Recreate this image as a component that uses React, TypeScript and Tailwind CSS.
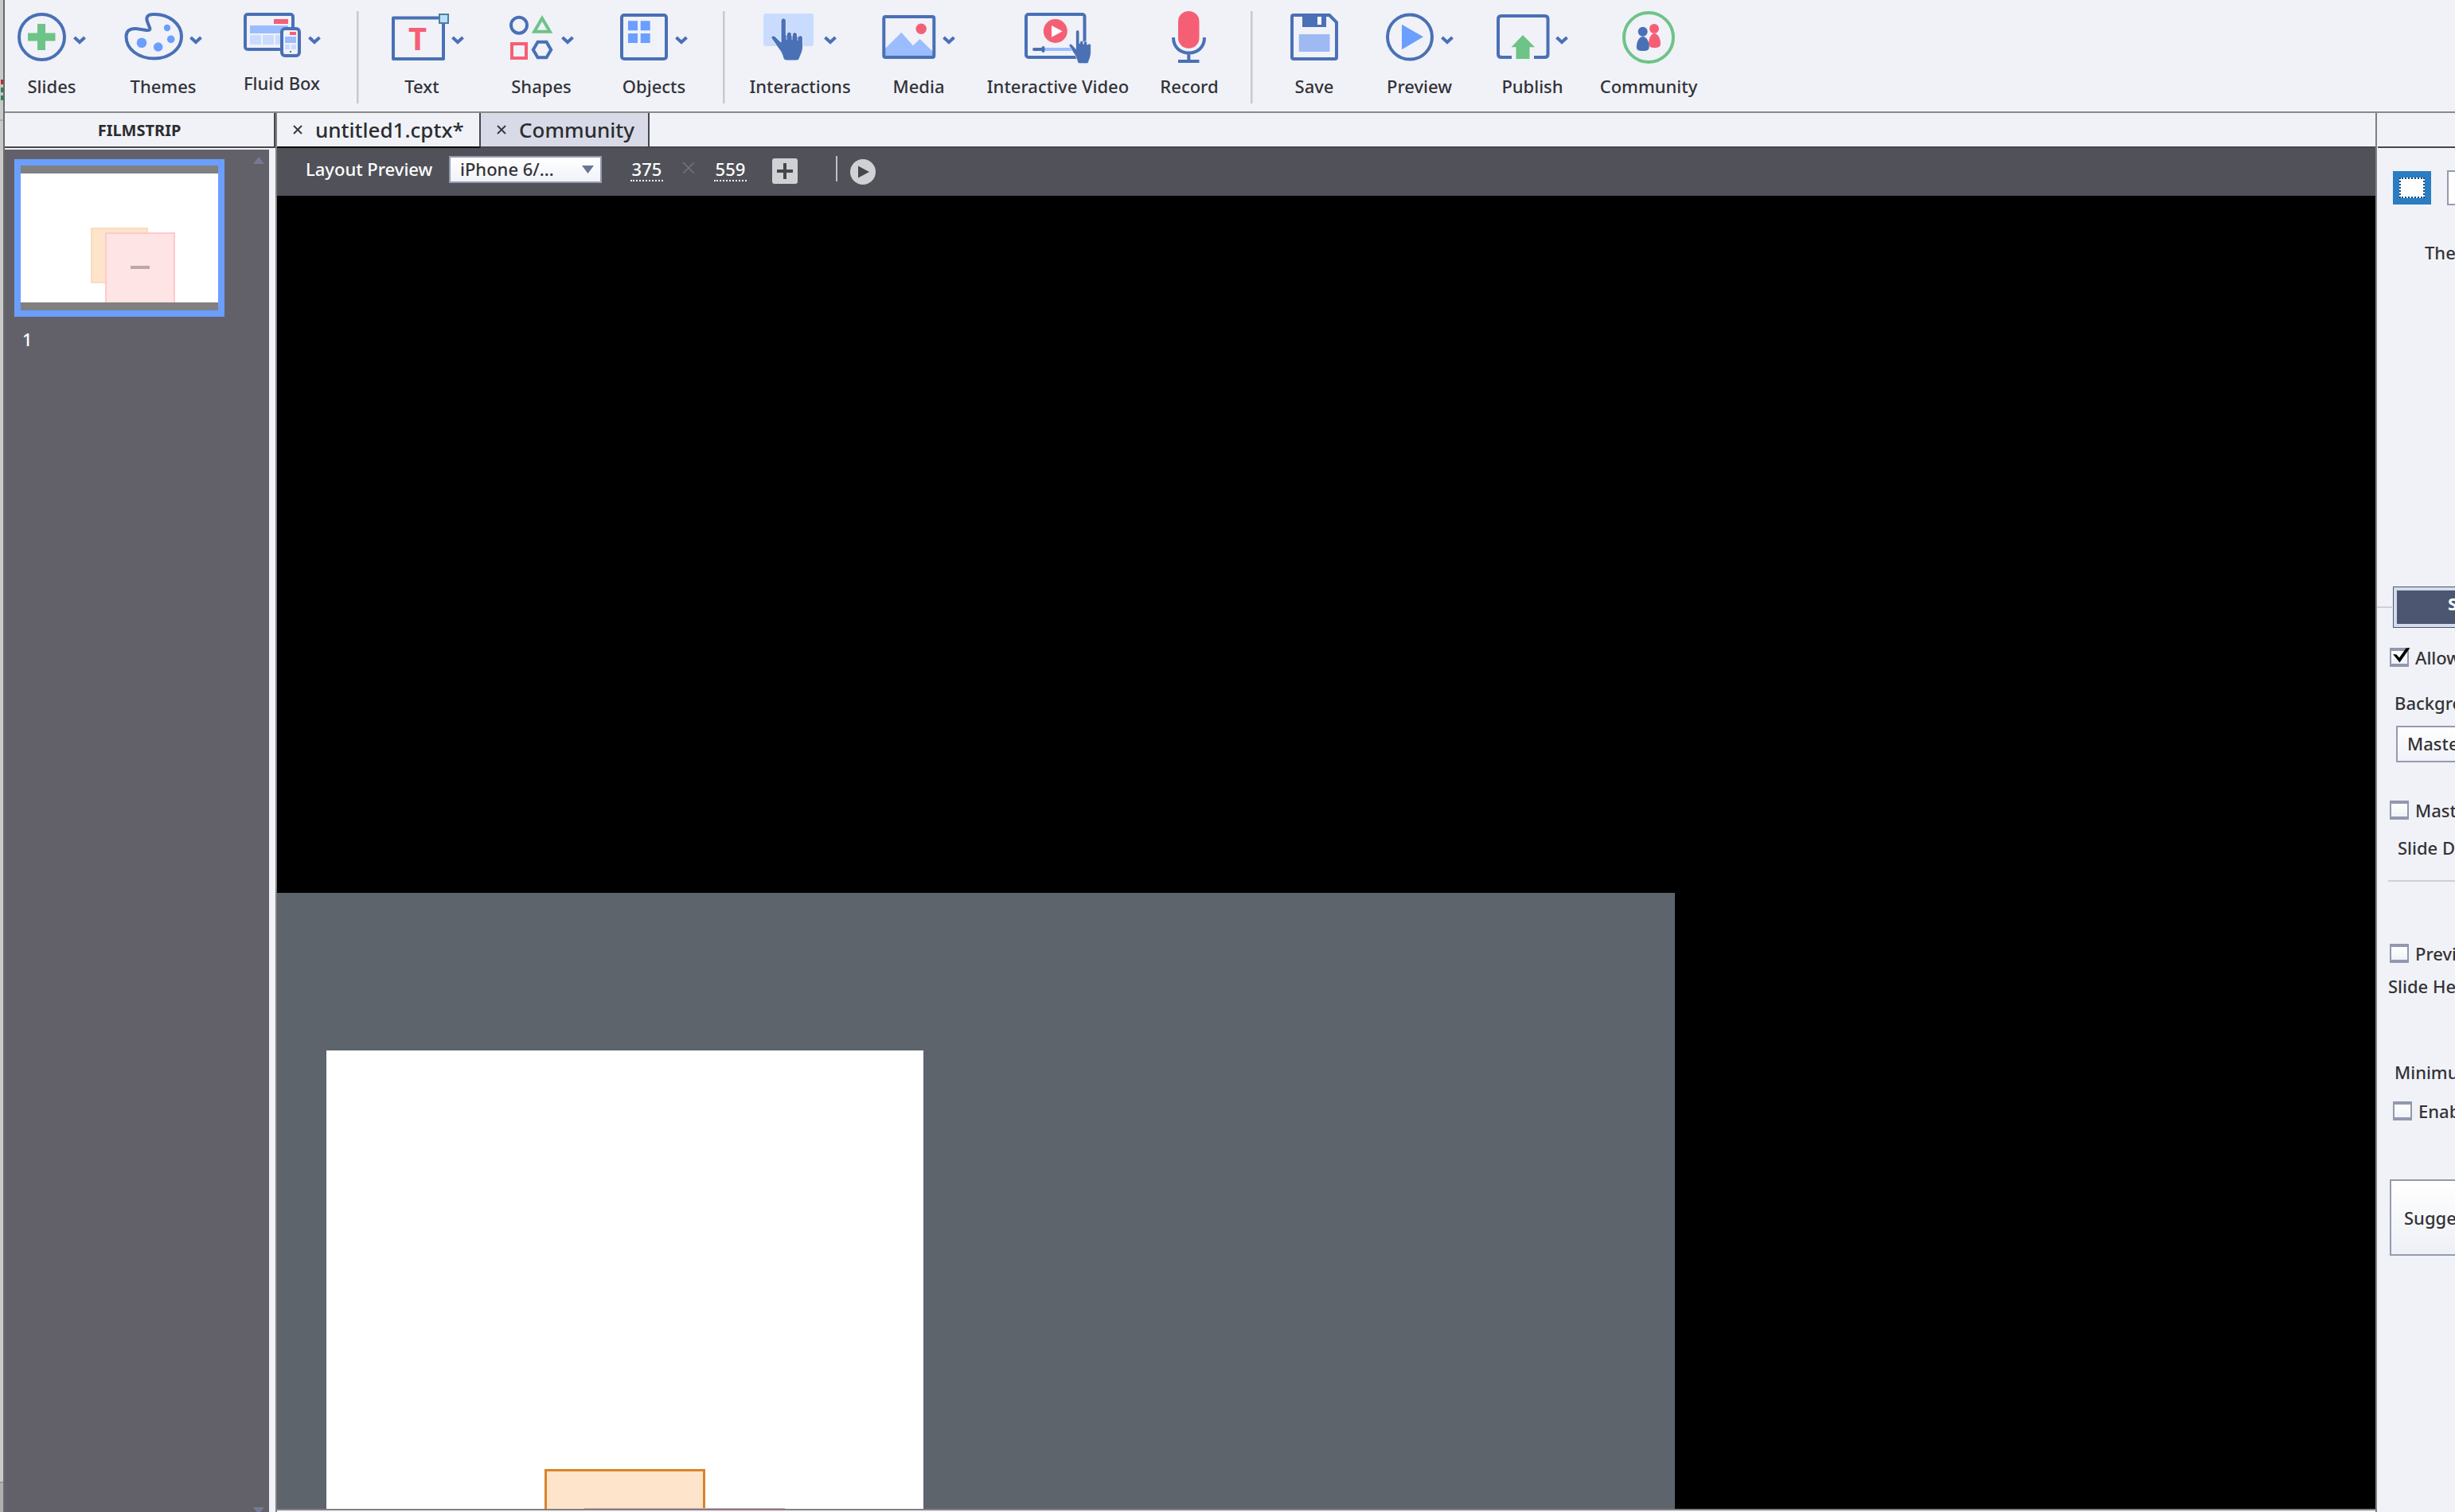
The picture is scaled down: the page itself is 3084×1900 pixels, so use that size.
import type { ReactNode } from "react";
import clsx from "clsx";

interface Tool {
  label: string;
  icon: ReactNode;
  iconWidth: number;
  slot: string;
  menu?: boolean;
  raised?: boolean;
}

const HAND =
  "M22 14a3.2 3.2 0 0 1 6.4 0V32h1V29.500q3-3 6 0V33h1V30q3-3 6 0v4h1V34q3-3 6 0V44C50 52 47 56 45 62Q44 64 41 64H29Q26 64 25 61C23 53 20 50 17 46L10 36C9 33 13 32 15 34L22 41Z";
const HAND_SLITS = "M29 30V38M36 31V38M43 32V39";

const insertTools: Tool[] = [
  {
    label: "Slides",
    iconWidth: 70,
    slot: "w-[118px]",
    menu: true,
    icon: (
      <>
        <circle cx="30.500" cy="34.500" r="28.500" fill="none" stroke="#4a70b5" strokeWidth="4" />
        <path d="M13 29.500h12v-11.500h10v11.500h12.500v10H35V51H25V39.500H13z" fill="#6ec387" />
      </>
    ),
  },
  {
    label: "Themes",
    iconWidth: 82,
    slot: "w-[162px]",
    menu: true,
    icon: (
      <>
        <path
          d="M36 6C56 5 72 18 72 34C72 50 56 61.500 38 61.500C18 61.500 2.500 50 2.500 34C2.500 27 7 23.500 15 24L28 26C32 26.500 33.500 25.500 31.500 21.500L29 15C27 9 30 6 36 6Z"
          fill="none"
          stroke="#4a70b5"
          strokeWidth="4"
        />
        <g fill="#6b9eff">
          <circle cx="22" cy="41.700" r="6.300" />
          <circle cx="42.700" cy="47" r="5.800" />
          <circle cx="58.700" cy="37.300" r="4.800" />
          <circle cx="54" cy="23" r="4.200" />
        </g>
      </>
    ),
  },
  {
    label: "Fluid Box",
    iconWidth: 81,
    slot: "w-[136px]",
    menu: true,
    raised: true,
    icon: (
      <>
        <rect x="2" y="6" width="60" height="44" rx="3" fill="none" stroke="#4a70b5" strokeWidth="4" />
        <path d="M38 12h18v6H38z" fill="#f55f76" />
        <path d="M8 20h48v10H8z" fill="#9bbcff" />
        <path d="M8 32h14v12H8zM24 32h14v12H24zM40 32h8v12h-8z" fill="#c9dcff" />
        <rect x="48" y="24" width="22" height="34" rx="4" fill="#f0f2f8" stroke="#4a70b5" strokeWidth="4" />
        <path d="M58 28h8v4h-8z" fill="#f55f76" />
        <path d="M52 34h14v8H52z" fill="#9bbcff" />
        <path d="M52 44h6v6h-6zM60 44h6v6h-6z" fill="#c9dcff" />
        <path d="M58 52h2v2h-2z" fill="#4a70b5" />
      </>
    ),
  },
];

const objectTools: Tool[] = [
  {
    label: "Text",
    iconWidth: 89,
    slot: "w-28",
    menu: true,
    icon: (
      <>
        <rect x="16" y="10.500" width="63" height="51.500" fill="none" stroke="#4a70b5" strokeWidth="4" strokeLinejoin="round" />
        <rect x="74" y="6" width="11" height="11" fill="#b8e0ff" stroke="#4f7f9f" strokeWidth="2" />
        <text x="46.500" y="51" textAnchor="middle" fontSize="40" fontWeight="700" fill="#f55f76">
          T
        </text>
      </>
    ),
  },
  {
    label: "Shapes",
    iconWidth: 65,
    slot: "w-[188px]",
    menu: true,
    icon: (
      <g fill="none" strokeWidth="4">
        <circle cx="12" cy="19.700" r="10" stroke="#4a70b5" />
        <path d="M41 11L50.800 27.700H31.200Z" stroke="#6ec387" />
        <path d="M3 43h18v18H3z" stroke="#f55f76" />
        <path d="M29.800 50.500L35.500 40.800H46.500L52.200 50.500L46.500 60.200H35.500Z" stroke="#4a70b5" />
      </g>
    ),
  },
  {
    label: "Objects",
    iconWidth: 69,
    slot: "w-[95px]",
    menu: true,
    icon: (
      <>
        <rect x="2" y="7" width="56" height="55" rx="3" fill="none" stroke="#4a70b5" strokeWidth="4" />
        <path d="M10 14.300h12v12H10zM25.700 14.300h12v12h-12zM10 30h12v12H10zM25.700 30h12v12h-12z" fill="#6b9eff" />
      </>
    ),
  },
];

const mediaTools: Tool[] = [
  {
    label: "Interactions",
    iconWidth: 76,
    slot: "w-[126px]",
    menu: true,
    icon: (
      <>
        <rect y="5" width="63" height="41" rx="3" fill="#c9dcff" />
        <path d={HAND} fill="#4a70b5" stroke="#e6eeff" strokeWidth="1" />
        <path d={HAND_SLITS} stroke="#c9dcff" strokeWidth="1" />
      </>
    ),
  },
  {
    label: "Media",
    iconWidth: 76,
    slot: "w-[172px]",
    menu: true,
    icon: (
      <>
        <path d="M4 49L24.300 28.700L39 45.300L47.500 37L64 53V58H4Z" fill="#9bbcff" />
        <rect x="2.300" y="9" width="63" height="51" rx="2" fill="none" stroke="#4a70b5" strokeWidth="4" />
        <circle cx="49.200" cy="24.300" r="6.700" fill="#f55f76" />
      </>
    ),
  },
  {
    label: "Interactive Video",
    iconWidth: 84,
    slot: "w-[178px]",
    icon: (
      <>
        <rect x="2" y="6" width="73.500" height="54" rx="3" fill="none" stroke="#4a70b5" strokeWidth="4" />
        <circle cx="38.800" cy="27" r="15" fill="#f55f76" />
        <path d="M34 20L47.600 27.300L34 34.700Z" fill="#fff" />
        <path d="M26 50H60" stroke="#9bbcff" strokeWidth="4" />
        <path d="M12 50H24M23.500 48v4" stroke="#4a70b5" strokeWidth="4" strokeLinecap="round" />
        <path d={HAND} transform="translate(49.300 17.200) scale(.69 .79)" fill="#4a70b5" stroke="#f0f2f8" strokeWidth="1" />
      </>
    ),
  },
  {
    label: "Record",
    iconWidth: 44,
    slot: "w-[152px]",
    icon: (
      <>
        <rect x="8" y="2" width="26.500" height="46.700" rx="13" fill="#f55f76" />
        <path d="M2 35C2 47 10 54.500 21.500 54.500S41 47 41 35M21.300 54V65M8 65H34.500" fill="none" stroke="#4a70b5" strokeWidth="4" />
      </>
    ),
  },
];

const projectTools: Tool[] = [
  {
    label: "Save",
    iconWidth: 60,
    slot: "w-[102px]",
    icon: (
      <>
        <path d="M4 7H49L58 16V60q0 2-2 2H4q-2 0-2-2V9q0-2 2-2z" fill="none" stroke="#4a70b5" strokeWidth="4" />
        <path d="M15 8h30v14H15z" fill="#4a70b5" />
        <path d="M34 9h5v10h-5z" fill="#fff" />
        <rect x="10.700" y="31" width="38.800" height="22" rx="1" fill="#9fb9f2" />
      </>
    ),
  },
  {
    label: "Preview",
    iconWidth: 69,
    slot: "w-[162px]",
    menu: true,
    icon: (
      <>
        <circle cx="30" cy="34.500" r="28" fill="none" stroke="#4a70b5" strokeWidth="4" />
        <path d="M20 18.700L47 34.300L20 50.300Z" fill="#6b9eff" />
      </>
    ),
  },
  {
    label: "Publish",
    iconWidth: 74,
    slot: "w-[122px]",
    menu: true,
    icon: (
      <>
        <path d="M19 60H6q-4 0-4-4V12q0-4 4-4H60.500q4 0 4 4V56q0 4-4 4H47" fill="none" stroke="#4a70b5" strokeWidth="4" />
        <path d="M33 32L48 47.300H41.500V62H24.500V47.300H18.500Z" fill="#6ec387" />
      </>
    ),
  },
  {
    label: "Community",
    iconWidth: 66,
    slot: "w-[170px]",
    icon: (
      <>
        <circle cx="33" cy="35" r="31" fill="none" stroke="#6ec387" strokeWidth="4" />
        <g fill="#f55f76">
          <circle cx="40" cy="24" r="6" />
          <path d="M40 30C45 30 48 37 48 43C48 47 45 48 40.500 48S33 47 33 43C33 37 36 30 40 30Z" />
        </g>
        <g fill="#4a70b5">
          <circle cx="25.700" cy="27.700" r="6" />
          <path d="M25.700 34C31 34 33.700 41 33.700 47C33.700 51 31 52 25.700 52S17.800 51 17.800 47C17.800 41 21 34 25.700 34Z" />
        </g>
      </>
    ),
  },
];

const ToolGroup = ({ tools, className }: { tools: Tool[]; className?: string }) => (
  <div className={clsx("flex", className)}>
    {tools.map((tool) => (
      <button
        key={tool.label}
        type="button"
        className={clsx("flex shrink-0 flex-col items-center whitespace-nowrap", tool.slot)}
      >
        <span className="flex">
          <svg width={tool.iconWidth} height="68" viewBox={`0 0 ${tool.iconWidth} 68`} aria-hidden="true">
            {tool.icon}
          </svg>
          {tool.menu && (
            <svg width="16" height="68" viewBox="0 0 16 68" aria-hidden="true">
              <path d="M1.500 35L8 41L14.500 35" fill="none" stroke="#4a70b5" strokeWidth="4" />
            </svg>
          )}
        </span>
        <span className={clsx("leading-6", tool.raised ? "mt-3" : "mt-4")}>{tool.label}</span>
      </button>
    ))}
  </div>
);

const Divider = ({ className }: { className: string }) => (
  <div className={clsx("mt-0.5 h-[116px] w-[3px] shrink-0 border-r border-[#dcdee6] bg-[#c6c8d2]", className)} />
);

const CloseIcon = () => (
  <svg width="12" height="12" viewBox="0 0 12 12" aria-hidden="true">
    <path d="M1 1L11 11M11 1L1 11" stroke="#3a3b42" strokeWidth="2" />
  </svg>
);

const DocumentTabs = () => (
  <div className="flex h-[44px] border-b-2 border-[#46474e] bg-[#f1f2f7] text-[26px] leading-8 text-[#2b2c30]">
    <div className="-mb-0.5 flex w-[256px] items-center border-r-2 border-b-2 border-r-[#46474e] border-b-[#0c0c10] pl-5">
      <button type="button" aria-label="Close untitled1.cptx">
        <CloseIcon />
      </button>
      <button type="button" className="ml-4">untitled1.cptx*</button>
    </div>
    <div className="flex w-[212px] items-center border-r-2 border-[#46474e] bg-[#d8dbe7] pl-5">
      <button type="button" aria-label="Close Community">
        <CloseIcon />
      </button>
      <button type="button" className="ml-4">Community</button>
    </div>
  </div>
);

const PreviewBar = () => (
  <div className="flex h-[60px] items-start bg-[#515259] pt-2.5 pl-9 text-white">
    <label htmlFor="device" className="w-[180px] pt-1 leading-6">
      Layout Preview
    </label>
    <div className="relative">
      <select
        id="device"
        className="block h-[34px] w-[192px] appearance-none border-2 border-[#949bb2] bg-linear-to-b from-white to-[#f0f2f8] pb-0.5 pl-3 leading-6 text-[#333338]"
      >
        <option>iPhone 6/...</option>
      </select>
      <svg className="pointer-events-none absolute top-3 right-2.5" width="15" height="10" aria-hidden="true">
        <path d="M0 0H15L7.500 10Z" fill="#6d7594" />
      </svg>
    </div>
    <button type="button" className="mt-1 ml-9 h-7 w-[41px] border-b-2 border-dotted pb-0.5 leading-6">
      375
    </button>
    <svg className="mt-2 ml-6" width="16" height="14" aria-hidden="true">
      <path d="M1 0L15 14M15 0L1 14" stroke="#74757b" strokeWidth="1.500" />
    </svg>
    <button type="button" className="mt-1 ml-6 h-7 w-[41px] border-b-2 border-dotted pb-0.5 leading-6">
      559
    </button>
    <button type="button" aria-label="Add device" className="mt-[3px] ml-8">
      <svg width="32" height="32" viewBox="0 0 32 32">
        <rect width="32" height="32" rx="3" fill="#d0d1d4" />
        <path d="M6 16H26M16 6V26" stroke="#46474b" strokeWidth="4" />
      </svg>
    </button>
    <div className="ml-12 h-8 w-0.5 bg-[#c0c1c5]" />
    <button type="button" aria-label="Play" className="mt-1 ml-4">
      <svg width="32" height="32" viewBox="0 0 32 32">
        <circle cx="16" cy="16" r="16" fill="#d0d1d4" />
        <path d="M10 8.500L24 16L10 23.500Z" fill="#46474b" />
      </svg>
    </button>
  </div>
);

const Filmstrip = () => (
  <aside className="flex w-[342px] shrink-0 flex-col border-r-2 border-[#808080] bg-[#f1f2f7]">
    <h2 className="h-[44px] border-r-2 border-b-2 border-[#46474e] pt-2.5 text-center text-[20px] font-bold leading-6 text-[#2b2c30]">
      FILMSTRIP
    </h2>
    <div className="mt-0.5 mr-2 flex flex-1 justify-between bg-[#62616a] pl-3">
      <div className="pt-3">
        <button type="button" aria-label="Slide 1" className="block w-[264px] border-8 border-[#6b9eff] bg-[#808080] py-2.5">
          <span className="relative block h-[162px] overflow-hidden bg-white">
            <span className="absolute top-[68px] left-[88px] h-[70px] w-[72px] border-2 border-[#f9dcc0] bg-[#fee4cb]" />
            <span className="absolute top-[74px] left-[106px] h-[100px] w-[88px] border-2 border-[#fecaca] bg-[#fee4e4]" />
            <span className="absolute top-[116px] left-[138px] h-1 w-6 bg-[#bba7a8]" />
          </span>
        </button>
        <p className="mt-4 pl-2.5 leading-6 text-white">1</p>
      </div>
      <div className="flex flex-col justify-between pt-[9px] pr-1.5">
        <svg width="14" height="9" aria-hidden="true">
          <path d="M7 0L14 9H0Z" fill="#777992" />
        </svg>
        <svg width="14" height="6" viewBox="0 0 14 6" aria-hidden="true">
          <path d="M0 0H14L7 9Z" fill="#737b96" />
        </svg>
      </div>
    </div>
  </aside>
);

const Stage = () => (
  <div className="flex min-h-0 flex-1 flex-col overflow-hidden bg-black pt-[876px]">
    <div className="w-[1756px] flex-1 bg-[#5d646b] pt-[198px] pl-[62px]">
      <div className="relative h-full w-[750px] overflow-hidden bg-white">
        <div className="absolute top-[526px] left-[274px] h-[200px] w-[202px] border-[3px] border-[#d98429] bg-[#fee4cb]" />
        <div className="absolute top-[575px] left-[324px] h-[200px] w-[252px] border border-[#e0a5a0] bg-[#fee4e4]" />
      </div>
    </div>
  </div>
);

const CheckRow = ({ label, checked, className }: { label: string; checked?: boolean; className: string }) => (
  <label className={clsx("flex items-center gap-2 whitespace-nowrap leading-6", className)}>
    <span className="relative block size-6 shrink-0">
      <input
        type="checkbox"
        defaultChecked={checked}
        className="block size-6 appearance-none border-x-2 border-y-4 border-[#9299ae] bg-linear-to-b from-white to-[#f0f2f8]"
      />
      {checked && (
        <svg className="pointer-events-none absolute top-0 left-0 overflow-visible" width="24" height="24" aria-hidden="true">
          <path d="M4 8L8.500 8.500L12 12.500L20.500 0.500L25.500 0L12.500 18.500Z" fill="#000" />
        </svg>
      )}
    </span>
    {label}
  </label>
);

const Properties = () => (
  <aside className="w-[100px] shrink-0 overflow-hidden border-l-2 border-[#808080] bg-[#f1f2f7] whitespace-nowrap leading-6 text-[#333338]">
    <div className="ml-px h-[44px] border-b-2 border-[#46474e]" />
    <div className="mt-7 flex w-[260px] items-center gap-5 pl-5">
      <button type="button" aria-label="Slide" className="h-[42px] w-12 shrink-0 bg-[#2a7dc3] p-2">
        <span className="block h-[26px] border-2 border-dotted border-[#174a78] bg-white" />
      </button>
      <input aria-label="Name" className="h-11 w-[160px] border-2 border-[#949bb2] bg-white" />
    </div>
    <p className="mt-[47px] pl-[60px]">The</p>
    <div className="mt-[408px] flex w-[240px] items-center">
      <div className="h-0.5 w-[19px] bg-[#cfcfd6]" />
      <button
        type="button"
        className="ml-px h-[52px] w-[200px] border border-[#4d5670] bg-[#d3dcee] p-1 text-left font-bold text-white"
      >
        <span className="block h-[42px] bg-[#4d5670] pt-1 pl-16">S</span>
      </button>
    </div>
    <CheckRow label="Allow" checked className="mt-[25px] pl-4" />
    <label htmlFor="background" className="mt-[33px] block pl-[22px]">
      Backgro
    </label>
    <select
      id="background"
      className="mt-[17px] ml-6 block h-[46px] w-[200px] appearance-none border-2 border-[#949bb2] bg-linear-to-b from-white to-[#f0f2f8] pb-0.5 pl-3"
    >
      <option>Maste</option>
    </select>
    <CheckRow label="Mast" className="mt-12 pl-4" />
    <p className="mt-[23px] pl-[26px]">Slide D</p>
    <hr className="mt-[29px] ml-3.5 border-t-2 border-[#cfcfd9]" />
    <CheckRow label="Previ" className="mt-[78px] pl-4" />
    <p className="mt-[17px] pl-3.5">Slide He</p>
    <p className="mt-[84px] pl-[22px]">Minimu</p>
    <CheckRow label="Enab" className="mt-[25px] pl-5" />
    <button
      type="button"
      className="mt-[74px] ml-4 h-24 w-[200px] border-2 border-[#949bb2] bg-linear-to-b from-white to-[#eef0f6] pl-4 text-left"
    >
      Sugge
    </button>
  </aside>
);

// Edge of the window that sits behind the editor
const BackWindow = () => (
  <div className="flex w-1 shrink-0 flex-col bg-[#c9c9c9]">
    <div className="mt-[100px] ml-px h-1.5 bg-[#b5322f]" />
    <div className="mt-1 ml-px h-1.5 bg-[#2c8553]" />
    <div className="mt-1 ml-px h-1.5 bg-[#2c8553]" />
    <div className="mt-6 h-0.5 bg-[#adadad]" />
    <div className="mt-auto h-[38px] border-t border-[#808080] bg-[#b0b0b0]" />
  </div>
);

const App = () => (
  <div className="flex h-screen overflow-hidden bg-[#f1f2f7] font-['Noto_Sans',sans-serif] text-[22px] font-medium text-[#333338]">
    <BackWindow />
    <div className="flex min-w-0 flex-1 flex-col border-l-2 border-[#6a6a6a]">
      <header className="flex h-[142px] shrink-0 overflow-hidden border-b-2 border-[#8a8a87] bg-[#f0f2f8] pt-3">
        <ToolGroup tools={insertTools} />
        <Divider className="ml-[26px]" />
        <ToolGroup tools={objectTools} className="ml-[23px]" />
        <Divider className="ml-[39px]" />
        <ToolGroup tools={mediaTools} className="ml-[31px]" />
        <Divider className="ml-px" />
        <ToolGroup tools={projectTools} className="ml-[26px]" />
      </header>
      <div className="flex min-h-0 flex-1">
        <Filmstrip />
        <main className="flex min-w-0 flex-1 flex-col">
          <DocumentTabs />
          <PreviewBar />
          <Stage />
          <div className="h-1 border-t-2 border-[#808085] bg-[#f4f4f8]" />
        </main>
        <Properties />
      </div>
    </div>
  </div>
);

export default App;
